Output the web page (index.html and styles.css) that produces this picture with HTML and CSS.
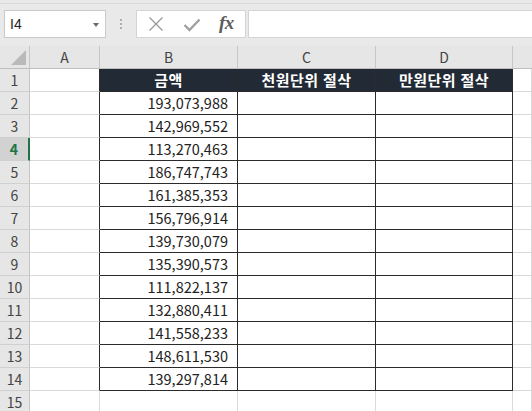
FILE: index.html
```html
<!DOCTYPE html>
<html lang="ko">
<head>
<meta charset="utf-8">
<title>Sheet</title>
<link rel="stylesheet" href="styles.css">
</head>
<body>
<div class="toolbar">
  <div class="toolbar-inner">
    <div class="namebox"><span class="name">I4</span><span class="caret"></span></div>
    <svg class="grip" width="4" height="12" viewBox="0 0 4 12"><circle cx="2" cy="2" r="1" fill="#9a9a9a"/><circle cx="2" cy="6" r="1" fill="#9a9a9a"/><circle cx="2" cy="10" r="1" fill="#9a9a9a"/></svg>
    <div class="fbuttons">
      <svg class="ico-x" width="16" height="16" viewBox="0 0 16 16"><path d="M1.5 1.5 L14.5 14.5 M14.5 1.5 L1.5 14.5" stroke="#9a9a9a" stroke-width="1.3" fill="none"/></svg>
      <svg class="ico-ok" width="18" height="14" viewBox="0 0 18 14"><path d="M1.5 7 L6.5 12 L16.5 1.5" stroke="#a0a0a0" stroke-width="2.4" fill="none"/></svg>
      <span class="fx">fx</span>
    </div>
    <div class="finput"></div>
  </div>
</div>
<div class="sheet">
  <div class="corner"><span class="tri"></span></div>
  <div class="ch">A</div><div class="ch">B</div><div class="ch">C</div><div class="ch">D</div><div class="ch ch-e"></div>

  <div class="rh">1</div><div class="c lb"></div><div class="c t h">금액</div><div class="c t h">천원단위 절삭</div><div class="c t h">만원단위 절삭</div><div class="c"></div>
  <div class="rh">2</div><div class="c lb"></div><div class="c t n">193,073,988</div><div class="c t"></div><div class="c t"></div><div class="c"></div>
  <div class="rh">3</div><div class="c lb"></div><div class="c t n">142,969,552</div><div class="c t"></div><div class="c t"></div><div class="c"></div>
  <div class="rh rh-sel">4</div><div class="c lb"></div><div class="c t n">113,270,463</div><div class="c t"></div><div class="c t"></div><div class="c"></div>
  <div class="rh">5</div><div class="c lb"></div><div class="c t n">186,747,743</div><div class="c t"></div><div class="c t"></div><div class="c"></div>
  <div class="rh">6</div><div class="c lb"></div><div class="c t n">161,385,353</div><div class="c t"></div><div class="c t"></div><div class="c"></div>
  <div class="rh">7</div><div class="c lb"></div><div class="c t n">156,796,914</div><div class="c t"></div><div class="c t"></div><div class="c"></div>
  <div class="rh">8</div><div class="c lb"></div><div class="c t n">139,730,079</div><div class="c t"></div><div class="c t"></div><div class="c"></div>
  <div class="rh">9</div><div class="c lb"></div><div class="c t n">135,390,573</div><div class="c t"></div><div class="c t"></div><div class="c"></div>
  <div class="rh">10</div><div class="c lb"></div><div class="c t n">111,822,137</div><div class="c t"></div><div class="c t"></div><div class="c"></div>
  <div class="rh">11</div><div class="c lb"></div><div class="c t n">132,880,411</div><div class="c t"></div><div class="c t"></div><div class="c"></div>
  <div class="rh">12</div><div class="c lb"></div><div class="c t n">141,558,233</div><div class="c t"></div><div class="c t"></div><div class="c"></div>
  <div class="rh">13</div><div class="c lb"></div><div class="c t n">148,611,530</div><div class="c t"></div><div class="c t"></div><div class="c"></div>
  <div class="rh">14</div><div class="c lb"></div><div class="c t n">139,297,814</div><div class="c t"></div><div class="c t"></div><div class="c"></div>
  <div class="rh">15</div><div class="c"></div><div class="c"></div><div class="c"></div><div class="c"></div><div class="c"></div>
</div>
</body>
</html>
```
FILE: styles.css
```css
* { box-sizing: border-box; }
html, body { margin: 0; padding: 0; }
body {
  width: 532px;
  height: 411px;
  overflow: hidden;
  background: #ffffff;
  font-family: "Noto Sans CJK KR", "Noto Sans", sans-serif;
}

.toolbar {
  height: 46px;
  background: #e9e9e9;
  padding-top: 3px;
}
.toolbar-inner {
  border-top: 1px solid #d9d9d9;
  padding-top: 6px;
  display: flex;
  align-items: flex-start;
  height: 42px;
}
.namebox {
  margin-left: 4px;
  width: 102px;
  height: 28px;
  background: #fff;
  border: 1px solid #c9c9c9;
  display: flex;
  align-items: center;
  justify-content: space-between;
  padding: 0 6px 0 5px;
}
.name {
  font-family: "Liberation Sans", "Noto Sans", sans-serif;
  font-size: 14px;
  color: #222;
}
.caret {
  width: 0; height: 0;
  border-left: 3.5px solid transparent;
  border-right: 3.5px solid transparent;
  border-top: 4px solid #6a6a6a;
  margin-top: 1px;
}
.grip { margin: 8px 13px 0 13px; }
.fbuttons {
  width: 110px;
  height: 28px;
  background: #fff;
  border: 1px solid #d4d4d4;
  display: flex;
  align-items: center;
  padding-left: 11px;
}
.ico-ok { margin-left: 19px; margin-top: 2px; }
.fx {
  margin-left: 18px;
  font-family: "Liberation Serif", serif;
  font-style: italic;
  font-weight: bold;
  font-size: 19px;
  color: #5c5c5c;
  letter-spacing: -0.5px;
  margin-top: -2px;
}
.finput {
  margin-left: 2px;
  flex: 1;
  height: 28px;
  background: #fff;
  border: 1px solid #d4d4d4;
  border-right: none;
}

.sheet {
  display: grid;
  grid-template-columns: 30px 70px 138px 138px 137px 1fr;
  grid-auto-rows: 23px;
}
.corner {
  background: #e6e6e6;
  border-right: 1px solid #c6c6c6;
  border-bottom: 1px solid #bdbdbd;
  position: relative;
}
.tri {
  position: absolute;
  right: 3px;
  bottom: 3px;
  width: 0; height: 0;
  border-left: 15px solid transparent;
  border-bottom: 15px solid #b9b9b9;
}
.ch {
  background: #e6e6e6;
  border-right: 1px solid #c6c6c6;
  border-bottom: 1px solid #bdbdbd;
  color: #444;
  font-size: 14px;
  text-align: center;
  line-height: 22px;
}
.ch-e { border-right: none; }
.rh {
  background: #e6e6e6;
  border-right: 1px solid #c6c6c6;
  border-bottom: 1px solid #d0d0d0;
  color: #444;
  font-size: 14px;
  text-align: center;
  line-height: 22px;
}
.rh-sel {
  background: #d2d2d2;
  color: #217346;
  font-weight: bold;
  border-right: 2px solid #217346;
}
.c {
  border-right: 1px solid #d9d9d9;
  border-bottom: 1px solid #d9d9d9;
  line-height: 22px;
  white-space: nowrap;
}
.lb { border-right-color: #2b2b2b; }
.t {
  border-right: 1px solid #2b2b2b;
  border-bottom: 1px solid #2b2b2b;
}
.h {
  background: #222b35;
  color: #ffffff;
  font-weight: bold;
  font-size: 15px;
  text-align: center;
  letter-spacing: 0.4px;
}
.n {
  text-align: right;
  padding-right: 9px;
  font-size: 14.5px;
  color: #222;
}
```
